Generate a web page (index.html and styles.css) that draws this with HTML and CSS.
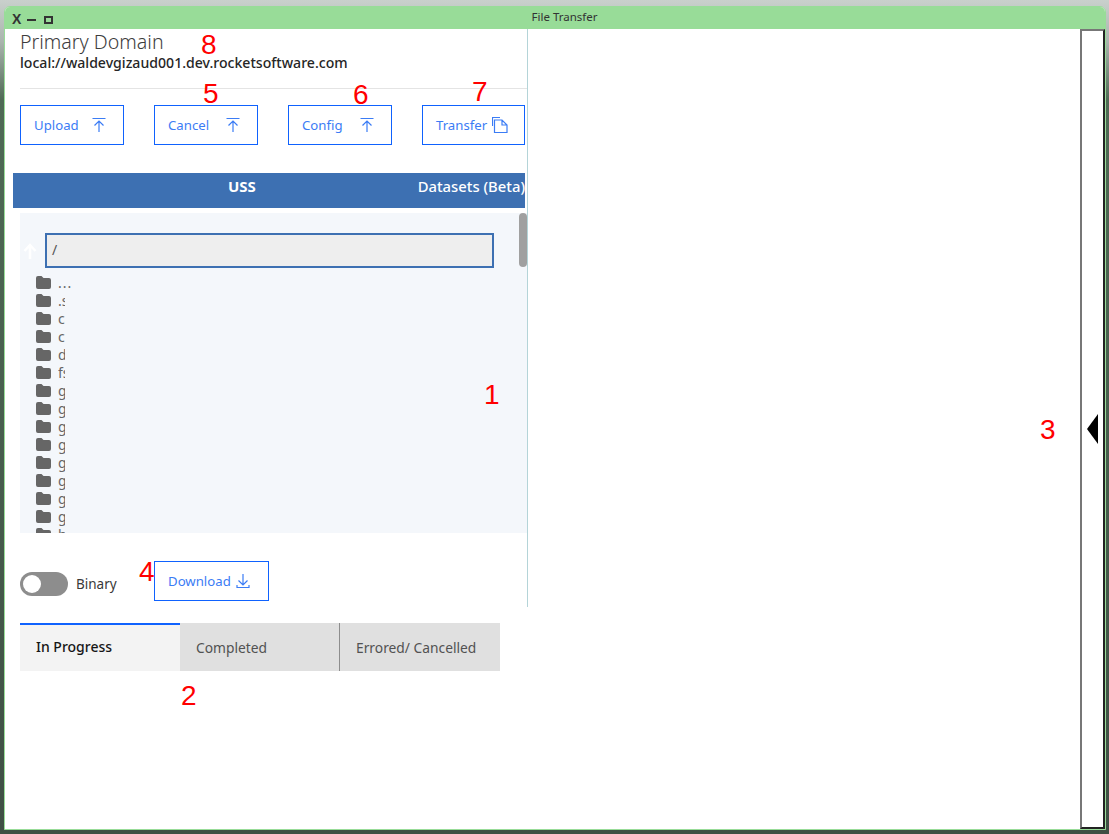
FILE: index.html
```html
<!DOCTYPE html>
<html>
<head>
    <title>File Transfer</title>
    <link rel="stylesheet" href="styles.css">
</head>
<body>
    <svg class="defs" width="0" height="0">
        <symbol id="folder" viewBox="0 0 15 13"><path d="M0 2q0-2 2-2h3.500l2 2H13q2 0 2 2v7q0 2-2 2H2q-2 0-2-2z"/></symbol>
        <symbol id="upload" viewBox="0 0 16 16"><path d="M1.500 1.500h13M8 15V4M3.500 8.500 8 4l4.500 4.500"/></symbol>
    </svg>

    <div class="window">
        <div class="titlebar">
            <div class="controls">
                <span class="ctl-x">X</span>
                <span class="ctl-min"></span>
                <span class="ctl-max"></span>
            </div>
            <div class="title">File Transfer</div>
        </div>

        <div class="content">
            <div class="main">
                <div class="pane">
                    <h1 class="domain">Primary Domain</h1>
                    <div class="host">local://waldevgizaud001.dev.rocketsoftware.com</div>
                    <div class="rule"></div>

                    <div class="actions">
                        <button class="btn">Upload <svg class="ico"><use href="#upload"/></svg></button>
                        <button class="btn">Cancel <svg class="ico"><use href="#upload"/></svg></button>
                        <button class="btn">Config <svg class="ico"><use href="#upload"/></svg></button>
                        <button class="btn btn-transfer">Transfer
                            <svg class="ico" viewBox="0 0 16 16"><path d="M.5 9V.5H8M2.500 15.500V3H10l5 5v7.500zM10 3v5h5"/></svg>
                        </button>
                    </div>

                    <div class="tabbar">
                        <span class="tab-uss">USS</span>
                        <span class="tab-ds">Datasets (Beta)</span>
                    </div>

                    <div class="tree">
                        <div class="thumb"></div>
                        <div class="pathrow">
                            <svg class="up" viewBox="0 0 14 16"><path d="M7 16V3M1.500 8 7 2l5.500 6"/></svg>
                            <div class="pathbox">/</div>
                        </div>
                        <div class="row"><svg class="folder"><use href="#folder"/></svg><span class="name name-parent">...</span></div>
                        <div class="row"><svg class="folder"><use href="#folder"/></svg><span class="name">.ssh</span></div>
                        <div class="row"><svg class="folder"><use href="#folder"/></svg><span class="name">cat</span></div>
                        <div class="row"><svg class="folder"><use href="#folder"/></svg><span class="name">cert</span></div>
                        <div class="row"><svg class="folder"><use href="#folder"/></svg><span class="name">dev</span></div>
                        <div class="row"><svg class="folder"><use href="#folder"/></svg><span class="name">fs</span></div>
                        <div class="row"><svg class="folder"><use href="#folder"/></svg><span class="name">global</span></div>
                        <div class="row"><svg class="folder"><use href="#folder"/></svg><span class="name">gnu</span></div>
                        <div class="row"><svg class="folder"><use href="#folder"/></svg><span class="name">go</span></div>
                        <div class="row"><svg class="folder"><use href="#folder"/></svg><span class="name">gskssl</span></div>
                        <div class="row"><svg class="folder"><use href="#folder"/></svg><span class="name">gpg</span></div>
                        <div class="row"><svg class="folder"><use href="#folder"/></svg><span class="name">git</span></div>
                        <div class="row"><svg class="folder"><use href="#folder"/></svg><span class="name">gzip</span></div>
                        <div class="row"><svg class="folder"><use href="#folder"/></svg><span class="name">grp</span></div>
                        <div class="row"><svg class="folder"><use href="#folder"/></svg><span class="name">home</span></div>
                    </div>

                    <div class="bottom">
                        <div class="toggle"><span class="knob"></span></div>
                        <span class="toggle-label">Binary</span>
                        <button class="btn btn-download">Download
                            <svg class="ico ico-down" viewBox="0 0 16 16"><path d="M8 1v11M3.500 7.500 8 12l4.500-4.500M2 12v2.500h12V12"/></svg>
                        </button>
                    </div>
                </div>

                <div class="status-tabs">
                    <div class="stab active">In Progress</div>
                    <div class="stab sep">Completed</div>
                    <div class="stab">Errored/ Cancelled</div>
                </div>
            </div>

            <div class="side"><span class="arrow"></span></div>
        </div>

        <span class="note n1">1</span>
        <span class="note n2">2</span>
        <span class="note n3">3</span>
        <span class="note n4">4</span>
        <span class="note n5">5</span>
        <span class="note n6">6</span>
        <span class="note n7">7</span>
        <span class="note n8">8</span>
    </div>
</body>
</html>
```

FILE: styles.css
```css
html, body {
    height: 100%;
}
body {
    margin: 0;
    padding: 6px 3px 4px 4px;
    box-sizing: border-box;
    overflow: hidden;
    background: linear-gradient(to bottom, #c9d0cc 0, #aab5ae 5%, #4f6a55 12%, #3f4f44 100%);
    font-family: "Noto Sans", "Open Sans", sans-serif;
}
.defs {
    position: absolute;
}
.window {
    position: relative;
    height: 100%;
    display: flex;
    flex-direction: column;
    background: white;
    border: 1px solid #98dc98;
    border-radius: 6px 6px 0 0;
    box-sizing: border-box;
}
.titlebar {
    height: 22px;
    flex: none;
    position: relative;
    display: flex;
    align-items: center;
    justify-content: center;
    background-color: #98dc98;
    border-radius: 5px 5px 0 0;
}
.controls {
    position: absolute;
    left: 7px;
    top: 6px;
    display: flex;
    align-items: center;
}
.ctl-x {
    font: bold 14px/13px "Liberation Sans", sans-serif;
    width: 9px;
    color: #333;
}
.ctl-min {
    width: 9px;
    height: 2px;
    margin-left: 6px;
    background-color: #333;
}
.ctl-max {
    width: 9px;
    height: 8px;
    box-sizing: border-box;
    border: 2px solid #333;
    margin-left: 8px;
}
.title {
    font-size: 11.500px;
    color: #333;
    margin-left: 19px;
    margin-top: -4px;
}
.content {
    flex: 1;
    display: flex;
    min-height: 0;
}
.main {
    flex: 1;
}
.pane {
    width: 523px;
    height: 578px;
    box-sizing: border-box;
    padding-left: 15px;
    border-right: 1px solid #b4d4d8;
}
.domain {
    margin: 0;
    font-size: 19.600px;
    line-height: 26px;
    font-weight: 300;
    color: #3d3d3d;
}
.host {
    font-size: 14.100px;
    line-height: 16px;
    font-weight: 500;
    color: #262626;
}
.rule {
    height: 1px;
    background-color: #e4e4e4;
    margin-top: 17px;
}
.actions {
    display: flex;
    gap: 30px;
    margin-top: 16px;
}
.btn {
    width: 104px;
    height: 40px;
    flex: none;
    padding: 0 16px 0 13px;
    display: flex;
    align-items: center;
    justify-content: space-between;
    background: white;
    border: 1px solid #0f62fe;
    color: #3b7cf5;
    font-family: inherit;
    font-size: 13.200px;
}
.btn-transfer {
    width: 103px;
    padding-right: 15px;
    justify-content: flex-start;
    gap: 5px;
}
.btn-download {
    width: 115px;
    padding-right: 17px;
}
.ico {
    width: 16px;
    height: 16px;
    flex: none;
    fill: none;
    stroke: #3b7cf5;
    stroke-width: 1.200;
}
.tabbar {
    margin: 28px 2px 0 -7px;
    height: 35px;
    background-color: #3d70b2;
    color: white;
    display: flex;
    align-items: center;
    position: relative;
}
.tab-uss {
    font-size: 15px;
    font-weight: 700;
    margin-left: 215px;
    margin-top: -9px;
}
.tab-ds {
    font-size: 14.800px;
    margin-left: auto;
    margin-top: -9px;
    font-weight: 500;
}
.tree {
    position: relative;
    margin-top: 5px;
    height: 320px;
    padding-top: 20px;
    box-sizing: border-box;
    overflow: hidden;
    background-color: #f4f7fb;
}
.thumb {
    position: absolute;
    right: 0;
    top: 0;
    width: 8px;
    height: 54px;
    border-radius: 4px;
    background-color: #a0a0a0;
}
.pathrow {
    display: flex;
    align-items: center;
    margin-bottom: 5px;
}
.up {
    width: 14px;
    height: 16px;
    margin-left: 3px;
    margin-right: 8px;
    fill: none;
    stroke: white;
    stroke-width: 2.500;
}
.pathbox {
    width: 449px;
    height: 35px;
    box-sizing: border-box;
    border: 2px solid #3d70b2;
    background-color: #eeeeee;
    color: #555;
    font-size: 14px;
    line-height: 29px;
    padding-left: 5px;
}
.row {
    height: 18px;
    display: flex;
    align-items: center;
    padding-left: 16px;
}
.folder {
    width: 15px;
    height: 13px;
    flex: none;
    fill: #666;
}
.name {
    width: 7px;
    margin-left: 7px;
    overflow: hidden;
    white-space: nowrap;
    font-size: 14px;
    color: #666;
}
.name-parent {
    width: 14px;
    letter-spacing: 1px;
}
.bottom {
    display: flex;
    align-items: center;
    margin-top: 28px;
}
.toggle {
    width: 48px;
    height: 24px;
    flex: none;
    margin-top: 6px;
    border-radius: 12px;
    background-color: #8d8d8d;
    display: flex;
    align-items: center;
    padding-left: 3px;
    box-sizing: border-box;
}
.knob {
    width: 18px;
    height: 18px;
    border-radius: 50%;
    background-color: white;
}
.toggle-label {
    width: 78px;
    margin-left: 8px;
    margin-top: 6px;
    font-size: 13.500px;
    color: #393939;
}
.status-tabs {
    display: flex;
    margin: 16px 0 0 15px;
}
.stab {
    width: 160px;
    height: 48px;
    box-sizing: border-box;
    padding: 0 16px;
    display: flex;
    align-items: center;
    font-size: 13.800px;
    color: #525252;
    background-color: #e0e0e0;
}
.stab.active {
    background-color: #f3f3f3;
    border-top: 2px solid #0f62fe;
    padding-bottom: 4px;
    color: #161616;
    font-size: 14px;
    font-weight: 500;
}
.stab.sep {
    border-right: 1px solid #8d8d8d;
}
.side {
    width: 25px;
    flex: none;
    display: flex;
    align-items: center;
    box-sizing: border-box;
    border-left: 2px solid #777;
    border-top: 2px solid #777;
    border-right: 2px solid #222;
    border-bottom: 2px solid #222;
    background: white;
}
.arrow {
    width: 0;
    height: 0;
    margin-left: 5px;
    margin-top: -1px;
    border-right: 11px solid black;
    border-top: 15px solid transparent;
    border-bottom: 15px solid transparent;
}
.note {
    position: absolute;
    color: #ff0000;
    font-family: "Liberation Sans", sans-serif;
    font-size: 28px;
    line-height: 32px;
}
.n1 { left: 479px; top: 372px; }
.n2 { left: 176px; top: 673px; }
.n3 { left: 1035px; top: 407px; }
.n4 { left: 134px; top: 549px; }
.n5 { left: 198px; top: 71px; }
.n6 { left: 348px; top: 72px; }
.n7 { left: 467px; top: 69px; }
.n8 { left: 196px; top: 22px; }
```
